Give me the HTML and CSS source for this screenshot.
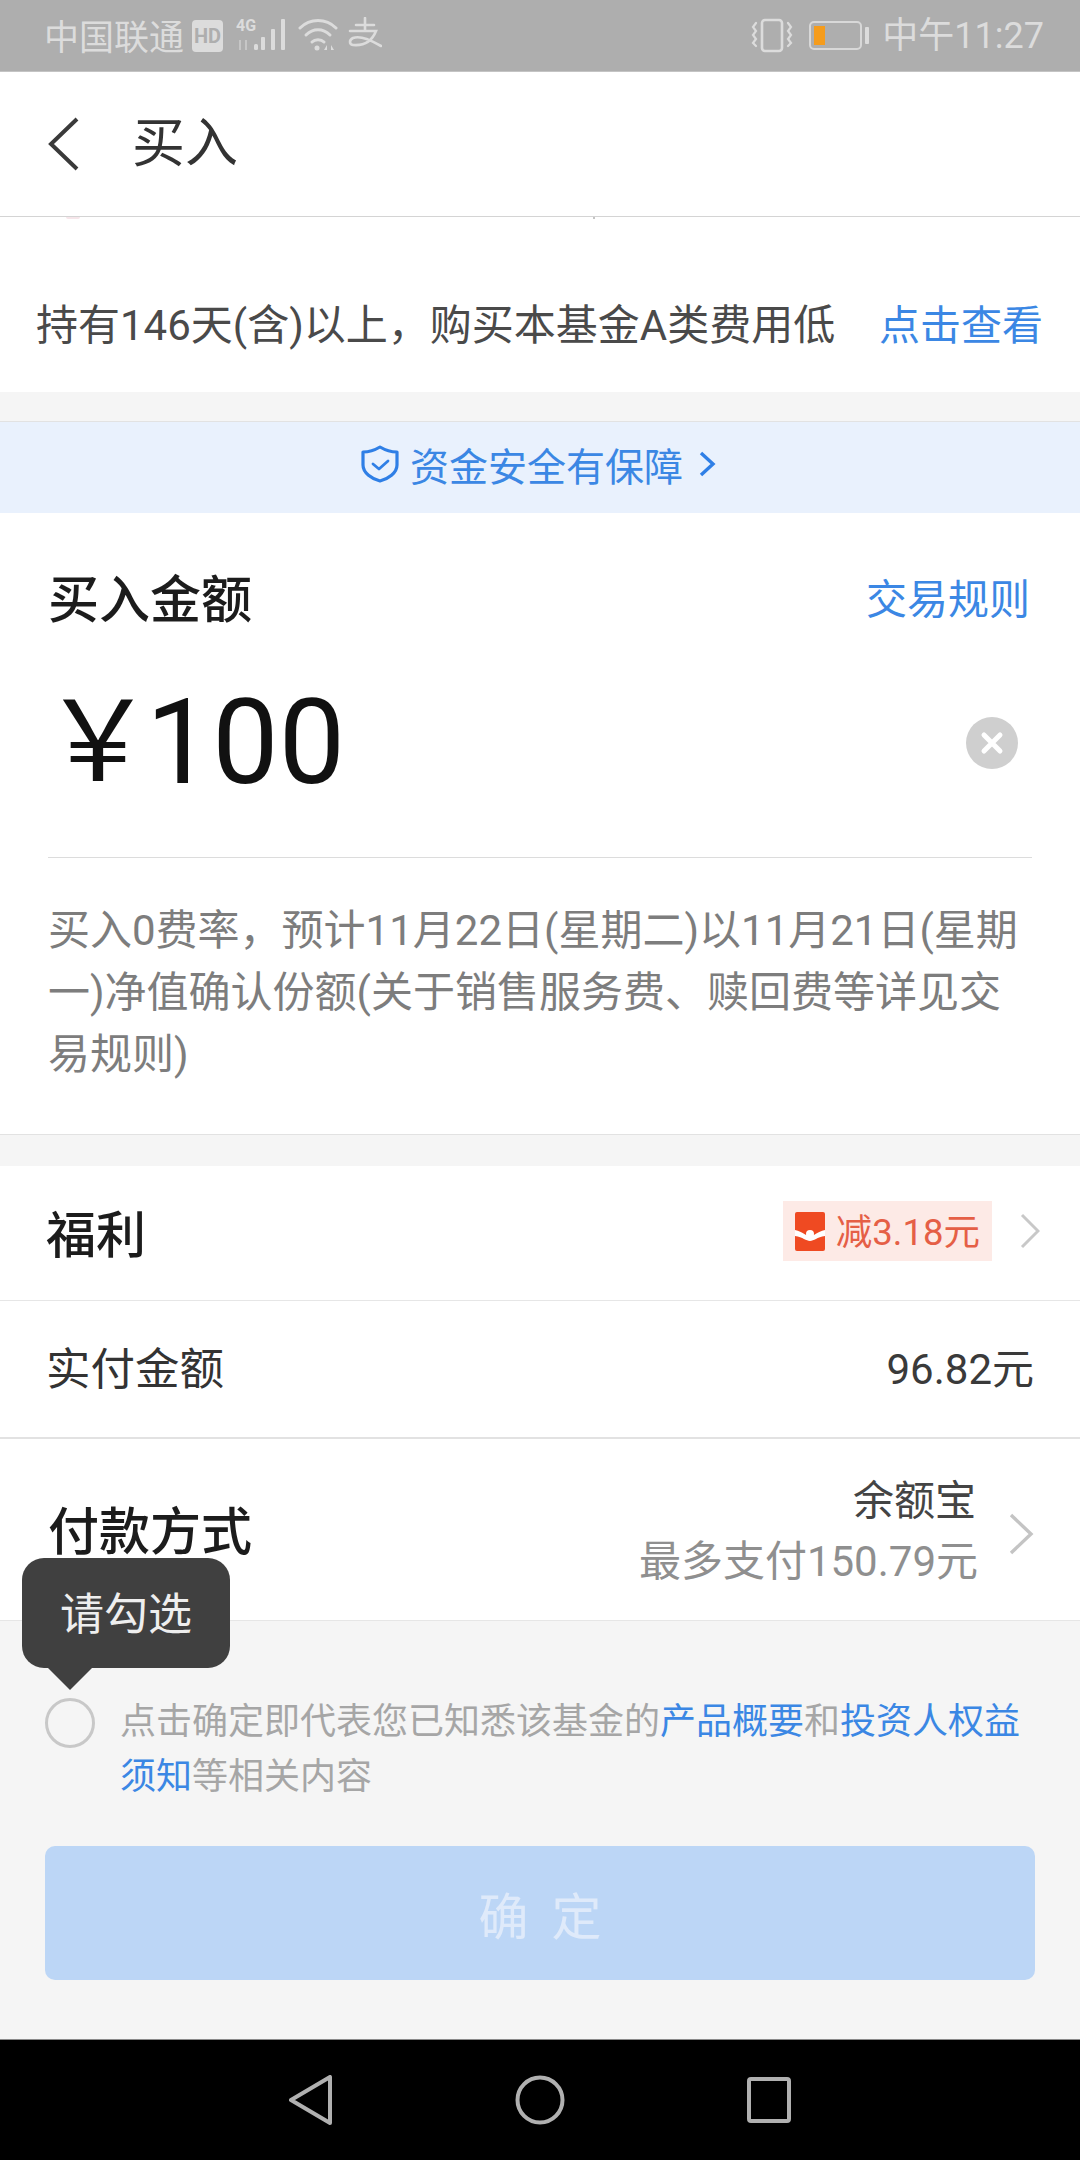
FILE: index.html
```html
<!DOCTYPE html>
<html lang="zh">
<head>
<meta charset="utf-8">
<title>买入</title>
<link rel="stylesheet" href="styles.css">
</head>
<body>
<div class="screen">
  <div class="status">
    <div class="status-left">
      <span class="carrier">中国联通</span>
      <span class="hd">HD</span>
      <svg class="sig" width="52" height="36" viewBox="0 0 52 36"><text x="0" y="13" class="sig-t">4G</text><g fill="#dcdcdc"><rect x="18" y="26" width="4" height="6" rx="1.5"/><rect x="25" y="19" width="4" height="13" rx="1"/><rect x="35" y="11" width="4" height="21" rx="1"/><rect x="45" y="1" width="4" height="31" rx="1"/></g><g fill="#c6c6c6"><rect x="3" y="22" width="2" height="10"/><rect x="9" y="22" width="2" height="10"/></g></svg>
      <svg class="wifi" width="40" height="36" viewBox="0 0 40 36" fill="none" stroke="#dcdcdc" stroke-width="3" stroke-linecap="round"><path d="M2 10C12 0 28 0 38 10"/><path d="M8 17C15 10 25 10 32 17"/><path d="M14 24C17 21 23 21 26 24"/><circle cx="19" cy="30" r="2.5" fill="#dcdcdc" stroke="none"/><path d="M29 27l-3 5h3zM33 27l3 5h-3z" fill="#dcdcdc" stroke="none"/></svg>
      <svg class="ali" width="34" height="32" viewBox="0 0 34 32" fill="none" stroke="#dcdcdc" stroke-width="2.6" stroke-linecap="round"><path d="M8 8H26M17 1V14M2 14H28C24 24 16 29 5 28C1 27 1 23 5 21C13 18 24 24 33 29"/></svg>
    </div>
    <div class="status-right">
      <svg width="42" height="36" viewBox="0 0 42 36" fill="none" stroke="#dcdcdc" stroke-width="2.6" stroke-linecap="round"><rect x="11" y="2" width="20" height="31" rx="3"/><path d="M5 5l-3 4 3 4-3 4 3 4-3 4 3 3M37 5l3 4-3 4 3 4-3 4 3 4-3 3" stroke-width="2.2"/></svg>
      <span class="battery"><span class="battery-fill"></span></span>
      <span class="battery-tip"></span>
      <span class="clock">中午11:27</span>
    </div>
  </div>

  <header class="nav">
    <svg class="back" width="32" height="54" viewBox="0 0 32 54" fill="none" stroke="#3a3a3a" stroke-width="4"><path d="M30 2L4 27L30 52"/></svg>
    <h1 class="title">买入</h1>
  </header>

  <section class="notice">
    <div class="clipped"><span class="mark-a"></span><span class="mark-b"></span></div>
    <div class="notice-row">
      <span class="notice-text">持有146天(含)以上，购买本基金A类费用低</span>
      <span class="link notice-link">点击查看</span>
    </div>
  </section>

  <div class="gap gap-a"></div>

  <div class="safe">
    <svg width="40" height="38" viewBox="0 0 40 38" fill="none" stroke="#2f7fe6" stroke-width="3.2" stroke-linejoin="round" stroke-linecap="round"><path d="M20 2C25 5 31 7 37 7V20C37 28 28 34 20 36C12 34 3 28 3 20V7C9 7 15 5 20 2Z"/><path d="M13 19l6 5 9-8" stroke-width="2.8"/></svg>
    <span class="safe-text">资金安全有保障</span>
    <svg width="18" height="28" viewBox="0 0 18 28" fill="none" stroke="#2f7fe6" stroke-width="3.4"><path d="M3 3l12 11L3 25"/></svg>
  </div>

  <section class="amount">
    <div class="amount-head">
      <span class="amount-label">买入金额</span>
      <span class="link rules">交易规则</span>
    </div>
    <div class="amount-input">
      <div class="amount-value"><span class="yen">￥</span><span class="num">100</span></div>
      <svg class="clear" width="52" height="52" viewBox="0 0 52 52"><circle cx="26" cy="26" r="26" fill="#cfcfcf"/><path d="M18 18L34 34M34 18L18 34" stroke="#fff" stroke-width="5" stroke-linecap="round"/></svg>
    </div>
    <p class="amount-note">买入0费率，预计11月22日(星期二)以11月21日(星期一)净值确认份额(关于销售服务费、赎回费等详见交易规则)</p>
  </section>

  <div class="gap gap-b"></div>

  <div class="row row-welfare">
    <span class="welfare-label">福利</span>
    <div class="row-end">
      <span class="coupon">
        <svg width="30" height="39" viewBox="0 0 30 39"><rect width="30" height="39" rx="2" fill="#ef4a22"/><path d="M0 18C8 20 11 24 15 24S22 20 30 18V24C22 25 19 29 15 29S8 25 0 24Z" fill="#fff"/><circle cx="15" cy="22" r="4" fill="#fff"/></svg>
        <span class="coupon-text">减3.18元</span>
      </span>
      <svg class="chev-sm" width="20" height="36" viewBox="0 0 20 36" fill="none" stroke="#c8c8c8" stroke-width="3"><path d="M2 2l16 16L2 34"/></svg>
    </div>
  </div>

  <div class="row row-paid">
    <span class="paid-label">实付金额</span>
    <span class="paid-value">96.82元</span>
  </div>

  <div class="row row-method">
    <span class="method-label">付款方式</span>
    <div class="row-end">
      <div class="method-info">
        <div class="method-name">余额宝</div>
        <div class="method-limit">最多支付150.79元</div>
      </div>
      <svg class="chev-lg" width="26" height="42" viewBox="0 0 26 42" fill="none" stroke="#c4c4c4" stroke-width="3.4"><path d="M3 2l20 19L3 40"/></svg>
    </div>
  </div>

  <footer class="foot">
    <div class="tip">请勾选</div>
    <div class="agree">
      <span class="radio"></span>
      <p class="agree-text">点击确定即代表您已知悉该基金的<span class="link">产品概要</span>和<span class="link">投资人权益须知</span>等相关内容</p>
    </div>
    <button class="confirm">确 定</button>
  </footer>

  <div class="softkeys">
    <svg width="44" height="50" viewBox="0 0 44 50" fill="none" stroke="#b0b0b0" stroke-width="4" stroke-linejoin="round"><path d="M2 25L41 2V48Z"/></svg>
    <svg width="50" height="50" viewBox="0 0 50 50" fill="none" stroke="#b0b0b0" stroke-width="4"><circle cx="25" cy="25" r="22.5"/></svg>
    <svg width="44" height="46" viewBox="0 0 44 46" fill="none" stroke="#b0b0b0" stroke-width="4" stroke-linejoin="round"><rect x="2" y="2" width="40" height="42" rx="2"/></svg>
  </div>
</div>
</body>
</html>
```

FILE: styles.css
```css
* { box-sizing: border-box; margin: 0; padding: 0; }
body { background: #fff; font-family: Roboto, "Noto Sans CJK SC", "Noto Sans", sans-serif; }
.screen { width: 1080px; height: 2160px; display: flex; flex-direction: column; overflow: hidden; position: relative; }

.status { height: 72px; background: #aeaeae; color: #dcdcdc; display: flex; justify-content: space-between; align-items: center; padding: 0 36px 0 44px; border-bottom: 1px solid #c4c4c4; }
.status-left, .status-right { display: flex; align-items: center; }
.carrier { font-size: 35px; line-height: 44px; margin-top: 6px; white-space: nowrap; }
.hd { width: 31px; height: 32px; margin-left: 8px; background: #dcdcdc; color: #aeaeae; border-radius: 4px; font-size: 20px; font-weight: 700; line-height: 32px; text-align: center; }
.sig { margin-left: 13px; }
.sig-t { font-size: 16px; font-weight: 700; fill: #dcdcdc; }
.wifi { margin-left: 10px; }
.ali { margin-left: 10px; margin-top: -6px; }
.battery { width: 53px; height: 29px; margin-left: 16px; border: 2px solid #d8d8d8; border-radius: 5px; padding: 3px; display: flex; }
.battery-fill { width: 11px; background: #f59c1c; }
.battery-tip { width: 4px; height: 17px; margin-left: 3px; background: #dcdcdc; border-radius: 1px; }
.clock { font-size: 36px; line-height: 44px; margin-left: 13px; white-space: nowrap; }

.nav { height: 145px; flex: none; background: #fff; border-bottom: 1px solid #d4d4d4; display: flex; align-items: center; padding: 0 0 0 47px; }
.title { font-size: 53px; font-weight: 400; color: #333; margin-left: 53px; line-height: 60px; }

.notice { height: 175px; background: #fff; flex: none; position: relative; }
.clipped { height: 4px; position: relative; display: flex; }
.mark-a { width: 14px; height: 2px; margin-left: 66px; background: #f6e6ea; border-radius: 0 0 7px 7px; }
.mark-b { width: 2px; height: 2px; margin-left: 513px; background: #c4c4c4; }
.notice-row { height: 171px; display: flex; justify-content: space-between; align-items: center; padding: 30px 37px 0 36px; }
.notice-text { font-size: 42px; color: #4a4a4a; white-space: nowrap; }
.notice-link { font-size: 41px; }
.link { color: #3b87e4; }

.gap { background: #f5f5f5; flex: none; }
.gap-a { height: 30px; border-bottom: 1px solid #e2e2e2; }
.gap-b { height: 32px; border-top: 1px solid #e2e2e2; }

.safe { height: 91px; flex: none; background: #e9f1fd; display: flex; align-items: center; justify-content: center; gap: 10px; padding: 0 4px 8px 0; }
.safe-text { font-size: 39px; color: #3b87e4; margin-right: 5px; white-space: nowrap; }

.amount { height: 621px; flex: none; background: #fff; padding: 0 48px; }
.amount-head { height: 166px; display: flex; justify-content: space-between; align-items: center; padding-right: 2px; }
.amount-label { font-size: 51px; color: #1c1c1c; font-weight: 500; }
.rules { font-size: 41px; }
.amount-input { height: 179px; border-bottom: 1px solid #dcdcdc; display: flex; justify-content: space-between; align-items: flex-start; padding-right: 14px; }
.amount-value { display: flex; align-items: center; height: 96px; margin-top: 16px; color: #111; }
.yen { font-size: 112px; width: 92px; margin-left: -6px; line-height: 96px; }
.num { font-size: 118px; line-height: 96px; margin-left: 12px; }
.clear { margin-top: 38px; }
.amount-note { font-size: 42px; line-height: 62px; color: #7d7d7d; margin-top: 42px; }

.row { flex: none; background: #fff; display: flex; justify-content: space-between; align-items: center; }
.row-end { display: flex; align-items: center; }
.row-welfare { height: 135px; padding: 0 40px 4px 46px; border-bottom: 1px solid #e6e6e6; }
.welfare-label { font-size: 50px; color: #1c1c1c; font-weight: 500; }
.coupon { display: flex; align-items: center; gap: 11px; height: 60px; padding: 0 12px 0 12px; background: #fdeae6; color: #e55f46; font-size: 36.5px; }
.coupon-text { margin-top: -3px; }
.chev-sm { margin-left: 28px; }
.row-paid { height: 138px; padding: 0 46px 8px 46px; border-bottom: 2px solid #e2e2e2; color: #3a3a3a; }
.paid-label { font-size: 44.5px; color: #333; white-space: nowrap; }
.paid-value { font-size: 42px; }
.row-method { height: 182px; padding: 0 46px 0 49px; border-bottom: 1px solid #e6e6e6; }
.method-label { font-size: 51px; font-weight: 500; color: #1c1c1c; margin-top: -4px; margin-left: -1px; }
.method-info { text-align: right; margin-top: 4px; }
.method-name { font-size: 41px; color: #444; line-height: 60px; padding-right: 2px; }
.method-limit { font-size: 42px; color: #8f8f8f; line-height: 62px; }
.chev-lg { margin-left: 30px; margin-top: 8px; }

.foot { flex: 1; background: #f5f5f5; position: relative; padding: 0 45px; border-bottom: 1px solid #8a8a8a; }
.tip { position: absolute; left: 22px; top: -63px; width: 208px; height: 110px; background: #404040; border-radius: 22px; color: #eee; font-size: 44px; line-height: 114px; text-align: center; }
.tip::after { content: ""; position: absolute; left: 26px; bottom: -22px; border: 22px solid transparent; border-top-color: #404040; border-bottom: 0; }
.agree { display: flex; margin-top: 51px; align-items: flex-start; }
.radio { width: 50px; height: 50px; flex: none; border: 3px solid #c8c8c8; border-radius: 50%; margin-top: 26px; margin-right: 25px; }
.agree-text { font-size: 36px; line-height: 55px; color: #a6a6a6; margin-top: 23px; width: 910px; }
.confirm { display: block; width: 990px; height: 134px; margin-top: 41px; padding-left: 6px; background: #bcd6f6; border: 0; border-radius: 10px; color: #dfeafa; font: 400 50px "Noto Sans CJK SC", sans-serif; letter-spacing: 6px; }

.softkeys { height: 120px; flex: none; background: #000; display: flex; align-items: center; justify-content: center; gap: 182px; }
```
